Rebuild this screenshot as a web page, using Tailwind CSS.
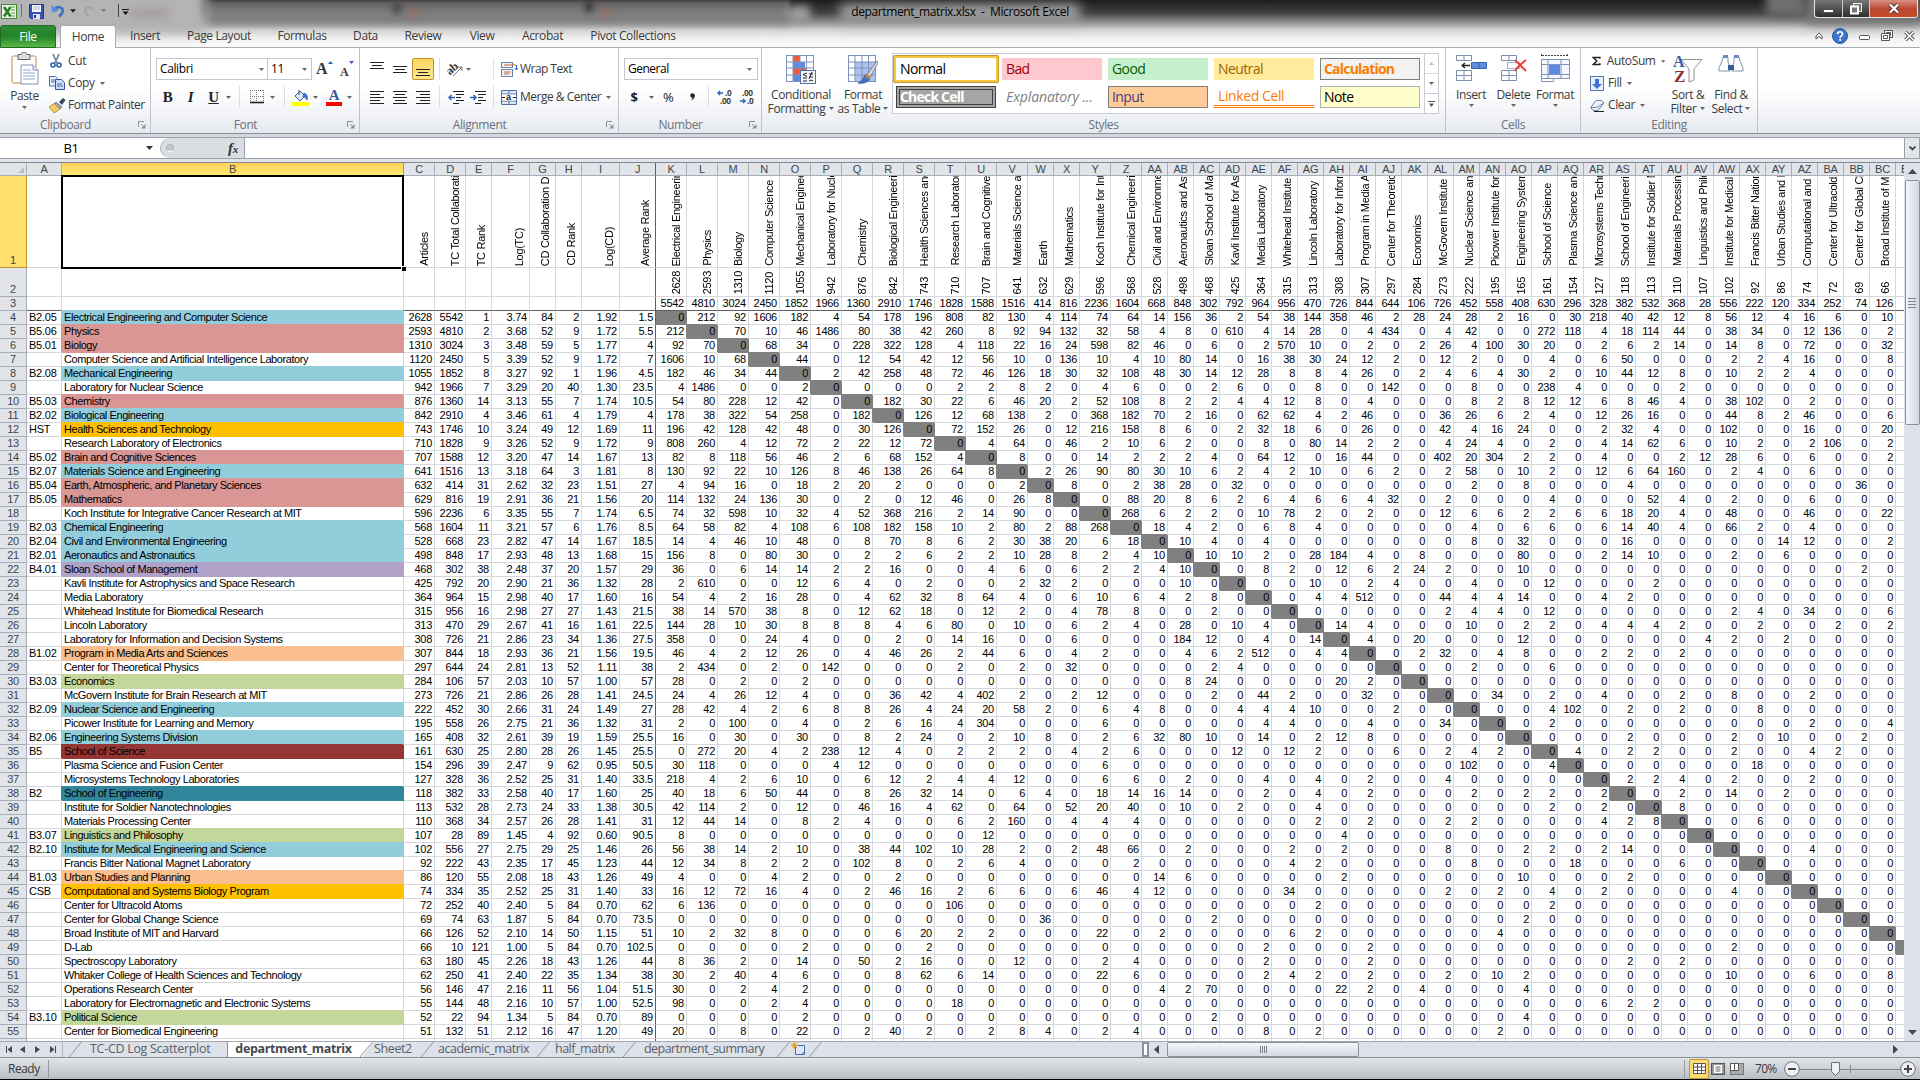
<!DOCTYPE html>
<html lang="en">
<head>
<meta charset="utf-8">
<title>department_matrix.xlsx - Microsoft Excel</title>
<script src="https://cdn.jsdelivr.net/npm/@tailwindcss/browser@4"></script>
</head>
<body class="w-[1920px] h-[1080px] overflow-hidden bg-black font-['Open_Sans','Noto_Sans',sans-serif] text-[12px] leading-none tracking-[-0.38px] text-[#3b3b3b]">

<svg class="hidden">
  <defs>
    <linearGradient id="gGrey" x1="0" y1="0" x2="1" y2="0"><stop offset="0" stop-color="#e6e6e6"/><stop offset="1" stop-color="#6b6b6b"/></linearGradient>
    <linearGradient id="gTube" x1="0" y1="0" x2="1" y2="0"><stop offset="0" stop-color="#2c4a82"/><stop offset=".45" stop-color="#b9cdec"/><stop offset="1" stop-color="#2c4a82"/></linearGradient>
    <linearGradient id="gWood" x1="0" y1="0" x2="0" y2="1"><stop offset="0" stop-color="#f3cb7c"/><stop offset="1" stop-color="#e3a94c"/></linearGradient>
  </defs>
  <symbol id="dd" viewBox="0 0 5 3"><path d="M0 0h5L2.5 3z" fill="#666"/></symbol>
  <symbol id="launch" viewBox="0 0 8 8"><path d="M.5 6V.5H6" fill="none" stroke="#8c9097"/><path d="M3 3l3 3" stroke="#8c9097"/><path d="M7.5 3v4.500H3z" fill="#8c9097"/></symbol>
</svg>

<div class="flex flex-col w-[1920px] h-[1079px] overflow-hidden">

<!-- title bar and ribbon tabs -->
<header class="relative h-[48px] shrink-0 overflow-hidden bg-[linear-gradient(to_bottom,#1c1c1c_0%,#404040_26%,#8e8e8e_46%,#d2d2d2_62%,#f4f4f4_82%,#fafafa_100%)]">
  <div class="absolute left-[205px] top-0 w-[585px] h-[30px] bg-linear-to-b from-[#5c5c5c] via-[#848484] to-transparent blur-[2px]"></div>
  <div class="absolute -left-4 -top-3 w-[222px] h-[46px] bg-[#b4b4b4] blur-[6px]"></div>
  <div class="absolute left-[393px] top-[2px] w-[8px] h-[12px] bg-[#4a4a4a] blur-[3px]"></div>
  <div class="absolute left-[585px] top-0 w-[8px] h-[12px] bg-[#3a3a3a] blur-[3px]"></div>
  <div class="absolute left-[788px] top-[6px] w-[22px] h-[16px] bg-[#a0a0a0] blur-[4px]"></div>
  <div class="absolute left-[1766px] -top-2 w-[40px] h-[24px] bg-[#707070] blur-[5px]"></div>
  <div class="absolute left-[1806px] -top-2 w-[114px] h-[32px] bg-[#777] blur-[5px]"></div>
  <div class="absolute left-[130px] top-[9px] w-[40px] h-[8px] bg-[#a39a9e] blur-[4px]"></div>
  <div class="absolute left-[409px] top-[7px] w-[10px] h-[11px] bg-[#b45a50] opacity-40 blur-[3px]"></div>
  <div class="absolute left-[601px] top-[7px] w-[10px] h-[11px] bg-[#b45a50] opacity-40 blur-[3px]"></div>
  <div class="absolute left-[840px] top-[4px] w-[240px] h-[17px] bg-[#a2a2a2] blur-[6px]"></div>

  <div class="absolute inset-0 flex flex-col">
    <div class="flex h-[25px] items-start">
      <div class="flex w-[140px] pt-[4px] items-start">
        <svg class="w-4 h-4 ml-px" viewBox="0 0 16 16"><rect x=".5" y=".5" width="15" height="14" fill="#e9f4e4" stroke="#3b8a36"/><path d="M10 3h4M10 6h4M10 9h4M10 12h4" stroke="#5aa852"/><path d="M3 3l6.500 9.500M9.500 3L3 12.500" stroke="#2d7f2b" stroke-width="2.600"/></svg>
        <span class="w-px h-[13px] bg-[#6e6e6e] ml-[4px]"></span>
        <svg class="w-[15px] h-[15px] ml-[7px]" viewBox="0 0 15 15"><path d="M.5.500h14v14H2l-1.500-1.500z" fill="#3b55b5" stroke="#23348c"/><rect x="3" y="1" width="9" height="7" fill="#f4f7fd"/><path d="M4 3h7M4 5h7" stroke="#aab8d8"/><rect x="4" y="10" width="7" height="5" fill="#dfe5f2"/><rect x="5" y="11" width="2" height="3" fill="#23348c"/></svg>
        <svg class="w-[14px] h-[14px] ml-[7px]" viewBox="0 0 15 15"><path d="M4 6.500c2-5 9.500-3.500 8.500 1.500-.5 2.500-2 4-4 5.500" fill="none" stroke="#3e6fc6" stroke-width="2.800"/><path d="M.5 1l.5 8.500L8.500 7z" fill="#5b8ede"/></svg>
        <svg class="w-[6px] h-[4px] ml-[5px] mt-[5px]" viewBox="0 0 5 3"><path d="M0 0h5L2.500 3z" fill="#222"/></svg>
        <svg class="w-[13px] h-[14px] ml-[7px]" viewBox="0 0 15 15"><path d="M11 6.500C9 1.500 1.500 3 2.500 8c.5 2.500 2 4 4 5.500" fill="none" stroke="#a0a0a0" stroke-width="2"/><path d="M14.500 1L14 9.500 6.500 7z" fill="#b0b0b0"/></svg>
        <svg class="w-[5px] h-[3px] ml-[5px] mt-[5px]" viewBox="0 0 5 3"><path d="M0 0h5L2.500 3z" fill="#777"/></svg>
        <span class="w-px h-[13px] bg-[#444] ml-[12px]"></span>
        <svg class="w-[7px] h-[6px] ml-[3px] mt-[5px]" viewBox="0 0 7 6"><path d="M0 .5h7" stroke="#111"/><path d="M.5 2.500h6L3.500 6z" fill="#111"/></svg>
      </div>
      <div class="grow text-center pr-[1px] pt-[6px] text-black">department_matrix.xlsx&nbsp; -&nbsp; Microsoft Excel</div>
      <div class="flex w-[139px] pl-[33px]">
        <div class="flex h-[18px] border border-t-0 border-[#e6e6e6] rounded-b-[4px] overflow-hidden bg-linear-to-b from-[#777] to-[#2f2f2f]">
          <span class="w-[28px] border-r border-[#ccc] flex justify-center pt-[9px]"><span class="w-[11px] h-[4px] bg-white border border-[#555]"></span></span>
          <span class="w-[27px] border-r border-[#ccc] flex justify-center pt-[3px]"><svg class="w-3 h-3" viewBox="0 0 12 12"><rect x="3.500" y=".5" width="8" height="8" fill="#777" stroke="#eee"/><rect x="1" y="3.500" width="7" height="7" fill="#777" stroke="#fff" stroke-width="2"/></svg></span>
          <span class="w-[47px] flex justify-center pt-[3px] bg-linear-to-b from-[#d99083] via-[#bb4a33] to-[#c64a28]"><svg class="w-3 h-[11px]" viewBox="0 0 12 11"><path d="M2 1.500l8 8M10 1.500l-8 8" stroke="#4b2b2b" stroke-width="4"/><path d="M2 1.500l8 8M10 1.500l-8 8" stroke="#fff" stroke-width="2.400"/></svg></span>
        </div>
      </div>
    </div>
    <nav class="flex h-[23px] border-b border-[#a9adb3]">
      <div class="w-[56px] h-[23px] rounded-t-[3px] border border-[#1f6a22] bg-linear-to-b from-[#2f8b32] via-[#218427] to-[#5cb947] text-white flex items-center justify-center">File</div>
      <div class="w-[56px] h-[23px] ml-[4px] rounded-t-[3px] border border-b-0 border-[#a9adb3] bg-white flex items-center justify-center">Home</div>
      <div class="w-[58px] flex items-center justify-center">Insert</div>
      <div class="w-[90px] flex items-center justify-center">Page Layout</div>
      <div class="w-[76px] flex items-center justify-center">Formulas</div>
      <div class="w-[51px] flex items-center justify-center">Data</div>
      <div class="w-[64px] flex items-center justify-center">Review</div>
      <div class="w-[54px] flex items-center justify-center">View</div>
      <div class="w-[67px] flex items-center justify-center">Acrobat</div>
      <div class="w-[114px] flex items-center justify-center">Pivot Collections</div>
      <div class="ml-auto flex items-center gap-[11px] pr-[5px] pb-[1px]">
        <svg class="w-[8px] h-[8px]" viewBox="0 0 8 8"><path d="M1 4l3-3 3 3v3L4 4.500 1 7z" fill="#fff" stroke="#555"/></svg>
        <svg class="w-[16px] h-[16px] -ml-[2px]" viewBox="0 0 16 16"><circle cx="8" cy="8" r="7.500" fill="#3f74cd" stroke="#2b559f"/><path d="M5.500 6.200C5.600 3 10.600 3 10.500 6c0 1.800-2.400 1.900-2.400 4" fill="none" stroke="#fff" stroke-width="1.700"/><rect x="7.200" y="11" width="1.900" height="1.900" fill="#fff"/></svg>
        <svg class="w-[11px] h-[5px] mt-[3px]" viewBox="0 0 11 5"><rect x=".5" y=".5" width="10" height="4" rx="1" fill="#fff" stroke="#555"/></svg>
        <svg class="w-[12px] h-[11px]" viewBox="0 0 12 11"><path d="M3.500 3V.5h8v7H9M5.500 3V2.500h4v3H9M.5 3.500h8v7h-8zM2.500 5.500h4v3h-4z" fill="#fff" stroke="#555"/></svg>
        <svg class="w-[11px] h-[10px]" viewBox="0 0 11 10"><path d="M1.500 1l8 8M9.500 1l-8 8" stroke="#555" stroke-width="3.600"/><path d="M1.500 1l8 8M9.500 1l-8 8" stroke="#fff" stroke-width="1.600"/></svg>
      </div>
    </nav>
  </div>
</header>

<!-- ribbon -->
<div class="flex h-[86px] shrink-0 border-b border-[#8b9097] bg-linear-to-b from-white from-50% to-[#e6e9ee]">

  <section class="w-[151px] shrink-0 border-r border-[#c0c4ca] flex flex-col">
    <div class="flex h-[69px] pt-[2px]">
      <div class="w-[49px] flex flex-col items-center pt-[2px]">
        <svg class="w-[28px] h-[34px]" viewBox="0 0 28 34"><rect x="1" y="4" width="24" height="27" rx="1.500" fill="url(#gWood)" stroke="#b98a3d"/><path d="M7 2.500h3c0-3 6-3 6 0h3v5H7z" fill="#d9dbe0" stroke="#666"/><path d="M10 13h12l5 5v14H10z" fill="#fff" stroke="#7f95bb"/><path d="M22 13v5h5" fill="#dfe8f6" stroke="#7f95bb"/><path d="M12 18h8M12 21h12M12 24h12M12 27h12" stroke="#8fa6cd"/></svg>
        <span class="mt-[4px] h-[12px]">Paste</span>
        <svg class="w-[5px] h-[3px] mt-[4px]"><use href="#dd"/></svg>
      </div>
      <div class="flex flex-col">
        <div class="flex items-center h-[22px]"><svg class="w-[14px] h-[14px] mr-[5px]" viewBox="0 0 14 14"><path d="M4 0l4 9M10 0L6 9" stroke="#6d7f99" stroke-width="1.600"/><circle cx="4" cy="11" r="2" fill="none" stroke="#2c5ea8" stroke-width="1.600"/><circle cx="10" cy="11" r="2" fill="none" stroke="#2c5ea8" stroke-width="1.600"/></svg>Cut</div>
        <div class="flex items-center h-[22px]"><svg class="w-[16px] h-[14px] mr-[3px]" viewBox="0 0 16 14"><path d="M.5.500h6l2 2V10h-8z" fill="#e9f0fb" stroke="#4b6ea8"/><path d="M6.500 3.500h6l3 3v7h-9z" fill="#c9dbf6" stroke="#2f559a"/><path d="M2 4h4M2 6h4M8 8h5M8 10h6" stroke="#4b6ea8"/></svg>Copy<svg class="w-[5px] h-[3px] ml-[5px]"><use href="#dd"/></svg></div>
        <div class="flex items-center h-[22px] tracking-[-0.5px]"><svg class="w-[17px] h-[15px] mr-[2px]" viewBox="0 0 17 15"><path d="M10 4l4-4 2.500 2L13 7z" fill="#39455f"/><path d="M7 4l6 5-2 2-6-5z" fill="#9aa5ba" stroke="#55607a" stroke-width=".7"/><path d="M5 5.500l6 5.500-6 4L0 9z" fill="#f3cf67" stroke="#a9812b" stroke-width=".8"/></svg>Format Painter</div>
      </div>
    </div>
    <div class="flex h-[16px] items-center text-[#6b727c]"><span class="w-[131px] text-center">Clipboard</span><svg class="w-2 h-2 ml-[7px]"><use href="#launch"/></svg></div>
  </section>

  <section class="w-[209px] shrink-0 border-r border-[#c0c4ca] flex flex-col">
    <div class="flex flex-col h-[69px] pt-[10px] pl-[5px] gap-[6px]">
      <div class="flex h-[22px] items-center">
        <div class="w-[112px] h-[22px] border border-[#c3c7cd] bg-white flex items-center px-[3px] text-black">Calibri<svg class="w-[5px] h-[3px] ml-auto"><use href="#dd"/></svg></div>
        <div class="w-[44px] h-[22px] border border-l-0 border-[#c3c7cd] bg-white flex items-center px-[3px] text-black">11<svg class="w-[5px] h-[3px] ml-auto mr-px"><use href="#dd"/></svg></div>
        <span class="ml-[4px] w-[12px] font-['Liberation_Serif',serif] font-bold text-[16px] text-[#333]">A</span><svg class="w-[5px] h-[3px] mb-[14px]" viewBox="0 0 5 3"><path d="M0 3h5L2.500 0z" fill="#2f62c0"/></svg>
        <span class="ml-[7px] mt-[5px] w-[9px] font-['Liberation_Serif',serif] font-bold text-[12px] text-[#333]">A</span><svg class="w-[5px] h-[3px] mb-[14px]" viewBox="0 0 5 3"><path d="M0 0h5L2.500 3z" fill="#2f62c0"/></svg>
      </div>
      <div class="flex h-[22px] items-center font-['Liberation_Serif',serif] text-[15px] text-[#222]">
        <span class="w-[23px] text-center font-bold">B</span><span class="w-[23px] text-center italic font-bold">I</span><span class="w-[23px] text-center underline font-bold">U</span>
        <svg class="w-[5px] h-[3px] ml-[1px]"><use href="#dd"/></svg><span class="w-px h-[22px] bg-[#dcdfe3] ml-[8px]"></span>
        <svg class="w-[14px] h-[14px] ml-[10px]" viewBox="0 0 14 14"><path d="M.5 0v12M6.500 0v12M13.500 0v12M0 .5h14M0 6.500h14" stroke="#777" stroke-dasharray="1 1"/><path d="M0 12.500h14" stroke="#222" stroke-width="1.600"/></svg>
        <svg class="w-[5px] h-[3px] ml-[6px]"><use href="#dd"/></svg><span class="w-px h-[22px] bg-[#dcdfe3] ml-[9px]"></span>
        <svg class="w-[17px] h-[17px] ml-[7px]" viewBox="0 0 17 17"><path d="M3 7l5-5 5 5-5 5z" fill="#dce7f6" stroke="#3b5d94"/><path d="M7 1v5" stroke="#3b5d94"/><path d="M12 4c3 1 4 4 3 7-1-2-2-3-4-3z" fill="#3f74c6" stroke="#3f74c6"/><rect x="0" y="13" width="17" height="4" fill="#ff0"/></svg>
        <svg class="w-[5px] h-[3px] ml-[4px]"><use href="#dd"/></svg>
        <span class="ml-[8px] w-[16px] h-[17px] border-b-4 border-[#f00] text-center font-bold text-[15px] leading-[13px] text-[#3a5ba0]">A</span>
        <svg class="w-[5px] h-[3px] ml-[5px]"><use href="#dd"/></svg>
      </div>
    </div>
    <div class="flex h-[16px] items-center text-[#6b727c]"><span class="w-[189px] text-center">Font</span><svg class="w-2 h-2 ml-[7px]"><use href="#launch"/></svg></div>
  </section>

  <section class="w-[259px] shrink-0 border-r border-[#c0c4ca] flex flex-col">
    <div class="flex flex-col h-[69px] pt-[10px] pl-[10px] gap-[6px]">
      <div class="flex h-[22px] items-center">
        <svg class="w-[14px] h-[14px]" viewBox="0 0 14 14"><path d="M0 .5h14M2 3.500h10M0 6.500h14" stroke="#222"/></svg>
        <svg class="w-[14px] h-[14px] ml-[9px]" viewBox="0 0 14 14"><path d="M0 4.500h14M2 7.500h10M0 10.500h14" stroke="#222"/></svg>
        <span class="w-[22px] h-[22px] ml-[5px] border border-[#c2922e] rounded-[2px] bg-linear-to-b from-[#fbd663] to-[#ffe78c] flex items-center justify-center"><svg class="w-[14px] h-[14px]" viewBox="0 0 14 14"><path d="M0 7.500h14M2 10.500h10M0 13.500h14" stroke="#222"/></svg></span>
        <span class="w-px h-[22px] bg-[#dcdfe3] ml-[5px]"></span>
        <svg class="w-[16px] h-[15px] ml-[8px] overflow-visible" viewBox="0 0 16 15"><text x="-1" y="10" transform="rotate(-40 5 8)" font-family="Liberation Serif" font-weight="bold" font-size="12" fill="#333">ab</text><path d="M5 14l9-9M14 9V5h-4" fill="none" stroke="#777"/></svg>
        <svg class="w-[5px] h-[3px] ml-[2px]"><use href="#dd"/></svg><span class="w-px h-[22px] bg-[#dcdfe3] ml-[22px]"></span>
        <svg class="w-[17px] h-[15px] ml-[7px]" viewBox="0 0 17 15"><rect x=".5" y=".5" width="11" height="5" fill="#eef3fb" stroke="#6d84ac"/><path d="M3 3h12" stroke="#c0662d"/><rect x=".5" y="7.500" width="11" height="7" fill="#eef3fb" stroke="#6d84ac"/><path d="M3 10h7M3 12h5" stroke="#c0662d"/><path d="M15.500 3v5l-2-2M15.500 8l1.500-2" fill="none" stroke="#2f62c0"/></svg>
        <span class="ml-[2px] tracking-[-0.55px]">Wrap Text</span>
      </div>
      <div class="flex h-[22px] items-center">
        <svg class="w-[14px] h-[13px]" viewBox="0 0 14 13"><path d="M0 .5h14M0 3.500h10M0 6.500h14M0 9.500h10M0 12.500h14" stroke="#222"/></svg>
        <svg class="w-[14px] h-[13px] ml-[9px]" viewBox="0 0 14 13"><path d="M0 .5h14M2 3.500h10M0 6.500h14M2 9.500h10M0 12.500h14" stroke="#222"/></svg>
        <svg class="w-[14px] h-[13px] ml-[9px]" viewBox="0 0 14 13"><path d="M0 .5h14M4 3.500h10M0 6.500h14M4 9.500h10M0 12.500h14" stroke="#222"/></svg>
        <span class="w-px h-[22px] bg-[#dcdfe3] ml-[9px]"></span>
        <svg class="w-[16px] h-[13px] ml-[8px]" viewBox="0 0 16 13"><path d="M5 .5h11M8 3.500h8M8 6.500h5M8 9.500h8M5 12.500h6" stroke="#222"/><path d="M7 6.500H1M3.500 4L1 6.500 3.500 9" fill="none" stroke="#2f62c0" stroke-width="1.500"/></svg>
        <svg class="w-[16px] h-[13px] ml-[6px]" viewBox="0 0 16 13"><path d="M5 .5h11M8 3.500h8M8 6.500h5M8 9.500h8M5 12.500h6" stroke="#222"/><path d="M0 6.500h6M3.500 4L6 6.500 3.500 9" fill="none" stroke="#2f62c0" stroke-width="1.500"/></svg>
        <span class="w-px h-[22px] bg-[#dcdfe3] ml-[7px]"></span>
        <svg class="w-[17px] h-[15px] ml-[7px]" viewBox="0 0 17 15"><path d="M.5.500h15v14H.5zM.5 4h15M.5 11h15M8 0v4M8 11v4" fill="#dbe6f7" stroke="#5572a5"/><rect x="1" y="4.500" width="14" height="6" fill="#fff"/><path d="M1 7.500h3M15 7.500h-3" stroke="#222"/><text x="5" y="10" font-family="Liberation Sans" font-weight="bold" font-size="9" fill="#222">a</text></svg>
        <span class="ml-[2px] tracking-[-0.5px]">Merge &amp; Center</span><svg class="w-[5px] h-[3px] ml-[5px]"><use href="#dd"/></svg>
      </div>
    </div>
    <div class="flex h-[16px] items-center text-[#6b727c]"><span class="w-[239px] text-center">Alignment</span><svg class="w-2 h-2 ml-[7px]"><use href="#launch"/></svg></div>
  </section>

  <section class="w-[143px] shrink-0 border-r border-[#c0c4ca] flex flex-col">
    <div class="flex flex-col h-[69px] pt-[10px] pl-[5px] gap-[6px]">
      <div class="w-[134px] h-[22px] border border-[#c3c7cd] bg-white flex items-center px-[3px] text-black tracking-[-0.5px]">General<svg class="w-[5px] h-[3px] ml-auto mr-[2px]"><use href="#dd"/></svg></div>
      <div class="flex h-[22px] items-center text-[#222]">
        <span class="w-[20px] text-center font-bold text-[13px]">$</span><svg class="w-[5px] h-[3px] ml-[5px]"><use href="#dd"/></svg>
        <span class="w-[14px] ml-[9px] text-[13px]">%</span>
        <svg class="w-[5px] h-[8px] ml-[13px]" viewBox="0 0 5 8"><circle cx="2.500" cy="2.500" r="2.200" fill="#222"/><path d="M4.600 2.500C5 5 3 7 .8 7.500 2 6.500 3 5 2.500 3z" fill="#222"/></svg>
        <span class="w-px h-[22px] bg-[#dcdfe3] ml-[13px]"></span>
        <svg class="w-[16px] h-[14px] ml-[8px] overflow-visible" viewBox="0 0 16 14"><path d="M6 3H1M3 1L1 3l2 2" fill="none" stroke="#2f62c0" stroke-width="1.500"/><text x="8" y="6" font-family="Liberation Sans" font-size="8.500" font-weight="bold" fill="#333">.0</text><text x="3" y="14" font-family="Liberation Sans" font-size="8.500" font-weight="bold" fill="#333">.00</text></svg>
        <svg class="w-[16px] h-[14px] ml-[6px] overflow-visible" viewBox="0 0 16 14"><path d="M1 11h5M4 9l2 2-2 2" fill="none" stroke="#2f62c0" stroke-width="1.500"/><text x="3" y="6" font-family="Liberation Sans" font-size="8.500" font-weight="bold" fill="#333">.00</text><text x="8" y="14" font-family="Liberation Sans" font-size="8.500" font-weight="bold" fill="#333">.0</text></svg>
      </div>
    </div>
    <div class="flex h-[16px] items-center text-[#6b727c]"><span class="w-[123px] text-center">Number</span><svg class="w-2 h-2 ml-[7px]"><use href="#launch"/></svg></div>
  </section>

  <section class="w-[684px] shrink-0 border-r border-[#c0c4ca] flex flex-col">
    <div class="flex h-[69px]">
      <div class="w-[72px] ml-[3px] pt-[7px] flex flex-col items-center">
        <svg class="w-[30px] h-[29px]" viewBox="0 0 30 29"><rect x=".5" y=".5" width="27" height="26" fill="#fff"/><rect x="7" y="0" width="7" height="7" fill="#ea5a42"/><rect x="7" y="7" width="12" height="6" fill="#5b8ae0"/><rect x="7" y="13" width="14" height="7" fill="#ea5a42"/><rect x="7" y="20" width="7" height="7" fill="#5b8ae0"/><path d="M.5 0v27M7 0v27M14 0v27M20.500 0v27M27.500 0v27M0 .5h28M0 7h28M0 13h28M0 20h28M0 26.500h28" stroke="#7e93bd" fill="none"/><rect x="14.500" y="15.500" width="15" height="13" fill="#f3f6fc" stroke="#5572a5"/><path d="M21 18l-4 1.500 4 2M17 23h4M17 26h4M23 19h4M23 22h4M26 17l-3 7M23 26l2-1 2 1" stroke="#222" fill="none"/></svg>
        <span class="mt-[5px] h-[13px]">Conditional</span>
        <span class="h-[13px] flex items-center">Formatting<svg class="w-[5px] h-[3px] ml-[4px]"><use href="#dd"/></svg></span>
      </div>
      <div class="w-[52px] pt-[7px] flex flex-col items-center">
        <svg class="w-[30px] h-[29px]" viewBox="0 0 30 29"><rect x=".5" y=".5" width="27" height="26" fill="#fff"/><rect x="7" y="7" width="21" height="20" fill="#a9c3ee"/><path d="M.5 0v27M7 0v27M14 0v27M20.500 0v27M27.500 0v27M0 .5h28M0 7h28M0 13h28M0 20h28M0 26.500h28" stroke="#7e93bd" fill="none"/><path d="M29 6L19 20l3 2 8-14z" fill="#d9dce2" stroke="#666" stroke-width=".7"/><path d="M19 19c-4 1-3 7-9 9 6 1 12-1 12-6z" fill="#4174c4" stroke="#2b4f8f" stroke-width=".7"/><path d="M18 20l4 3" stroke="#c78839" stroke-width="3"/></svg>
        <span class="mt-[5px] h-[13px]">Format</span>
        <span class="h-[13px] flex items-center">as Table<svg class="w-[5px] h-[3px] ml-[3px]"><use href="#dd"/></svg></span>
      </div>
      <div class="ml-[3px] mt-[5px] h-[61px] w-[547px] border border-[#c9cdd3] bg-white flex text-[14px] tracking-[-0.6px]">
        <div class="grid grid-cols-[100px_100px_100px_100px_100px] gap-x-[6px] grid-rows-[22px_22px] gap-y-[6px] pt-[4px] pl-[3px] w-[531px]">
          <div class="w-[106px] h-[28px] -ml-[3px] -mt-[3px] border-[3px] border-[#f4c941] outline-1 -outline-offset-1 outline-[#c39a34] rounded-[2px] flex items-center pl-[4px] text-black">Normal</div>
          <div class="bg-[#ffc7ce] text-[#9c0006] flex items-center pl-[4px]">Bad</div>
          <div class="bg-[#c6efce] text-[#006100] flex items-center pl-[4px]">Good</div>
          <div class="bg-[#ffeb9c] text-[#9c6500] flex items-center pl-[4px]">Neutral</div>
          <div class="bg-[#f2f2f2] border border-[#7f7f7f] text-[#fa7d00] font-bold flex items-center pl-[3px] tracking-[-0.8px]">Calculation</div>
          <div class="w-[100px] bg-[#a5a5a5] border-4 border-double border-[#3f3f3f] text-white font-bold flex items-center tracking-[-0.8px]">Check Cell</div>
          <div class="text-[#7f7f7f] italic flex items-center pl-[4px] whitespace-nowrap tracking-[-0.1px]">Explanatory ...</div>
          <div class="bg-[#ffcc99] border border-[#7f7f7f] text-[#3f3f76] flex items-center pl-[3px]">Input</div>
          <div class="border-b-[3px] border-double border-[#ff8001] text-[#fa7d00] flex items-center pl-[4px] tracking-[-0.4px]">Linked Cell</div>
          <div class="bg-[#ffffcc] border border-[#b2b2b2] text-black flex items-center pl-[3px]">Note</div>
        </div>
        <div class="w-[14px] flex flex-col border-l border-[#c9cdd3]">
          <div class="h-[20px] border-b border-[#d5d8dd] flex items-center justify-center"><svg class="w-[5px] h-[3px]" viewBox="0 0 5 3"><path d="M0 3h5L2.500 0z" fill="#bbb"/></svg></div>
          <div class="h-[20px] border-b border-[#c9cdd3] flex items-center justify-center"><svg class="w-[5px] h-[3px]"><use href="#dd"/></svg></div>
          <div class="h-[19px] flex items-center justify-center"><svg class="w-[7px] h-[6px]" viewBox="0 0 7 6"><path d="M0 .5h7" stroke="#555"/><path d="M1 2.500h5L3.500 6z" fill="#555"/></svg></div>
        </div>
      </div>
    </div>
    <div class="flex h-[16px] items-center text-[#6b727c]"><span class="w-[684px] text-center">Styles</span></div>
  </section>

  <section class="w-[135px] shrink-0 border-r border-[#c0c4ca] flex flex-col">
    <div class="flex h-[69px] pl-[4px] pt-[6px]">
      <div class="w-[42px] flex flex-col items-center">
        <svg class="w-[31px] h-[29px]" viewBox="0 0 31 29"><path d="M.5 1.500h15v5h-15zM8 1.500v5M.5 16.500h15v10h-15zM8 16.500v10M.5 21.500h15" fill="#fff" stroke="#7e8fae"/><path d="M15.500 8.500h15v6h-15zM23 8.500v6" fill="#5f8fe3" stroke="#3a62aa"/><path d="M14 11.500H6M9 9l-3 2.500L9 14" fill="none" stroke="#222" stroke-width="1.300"/></svg>
        <span class="mt-[6px] h-[12px]">Insert</span><svg class="w-[5px] h-[3px] mt-[3px]"><use href="#dd"/></svg>
      </div>
      <div class="w-[43px] flex flex-col items-center">
        <svg class="w-[26px] h-[29px]" viewBox="0 0 26 29"><path d="M.5 1.500h15v5h-15zM8 1.500v5M.5 16.500h15v10h-15zM8 16.500v10M.5 21.500h15" fill="#fff" stroke="#7e8fae"/><path d="M6.500 8.500h12v6h-12z" fill="#fff" stroke="#3a62aa" stroke-dasharray="1 1"/><path d="M14 6l11 11M25 6c-4 3-8 6-11 11" fill="none" stroke="#e8402a" stroke-width="2"/></svg>
        <span class="mt-[6px] h-[12px]">Delete</span><svg class="w-[5px] h-[3px] mt-[3px]"><use href="#dd"/></svg>
      </div>
      <div class="w-[40px] flex flex-col items-center">
        <svg class="w-[31px] h-[29px]" viewBox="0 0 31 29"><path d="M2 1.500h25M1.500 0v3M27.500 0v3" stroke="#444" stroke-dasharray="2 1"/><path d="M1.500 5.500h28v19h-28zM8 5v20M21 5v20M1 10.500h29M1 20.500h29" fill="#f3f6fc" stroke="#7e93bd"/><rect x="9" y="11" width="11" height="9" fill="#5b8ae0"/><path d="M1.500 24.500h12v3h-12z" fill="#fff" stroke="#7e93bd"/></svg>
        <span class="mt-[6px] h-[12px]">Format</span><svg class="w-[5px] h-[3px] mt-[3px]"><use href="#dd"/></svg>
      </div>
    </div>
    <div class="flex h-[16px] items-center justify-center text-[#6b727c]">Cells</div>
  </section>

  <section class="w-[177px] shrink-0 border-r border-[#c0c4ca] flex flex-col">
    <div class="flex h-[69px]">
      <div class="w-[84px] pl-[9px] pt-[2px] flex flex-col">
        <div class="flex items-center h-[22px]"><svg class="w-[10px] h-[10px] ml-[2px] mr-[6px]" viewBox="0 0 10 10"><path d="M9 2.500V1H1.500L5.500 5 1.500 9H9V7.500" fill="none" stroke="#222" stroke-width="1.700"/></svg>AutoSum<svg class="w-[5px] h-[3px] ml-[5px]"><use href="#dd"/></svg></div>
        <div class="flex items-center h-[22px]"><svg class="w-[14px] h-[15px] mr-[4px]" viewBox="0 0 14 15"><rect x=".5" y=".5" width="13" height="14" fill="#e6effc" stroke="#5577b5"/><path d="M5 3h4v5h3l-5 5-5-5h3z" fill="#3f74d4"/></svg>Fill<svg class="w-[5px] h-[3px] ml-[5px]"><use href="#dd"/></svg></div>
        <div class="flex items-center h-[22px]"><svg class="w-[15px] h-[13px] mr-[3px]" viewBox="0 0 15 13"><path d="M6 1.500h5.500L14 4l-6 7.500H3L.8 8.500z" fill="#edf1f8" stroke="#6b82ad"/><path d="M.8 8.500h6L14 4" fill="none" stroke="#6b82ad"/><path d="M4 12.500h10" stroke="#222"/></svg>Clear<svg class="w-[5px] h-[3px] ml-[5px]"><use href="#dd"/></svg></div>
      </div>
      <div class="w-[46px] pt-[6px] flex flex-col items-center">
        <svg class="w-[30px] h-[30px]" viewBox="0 0 30 30"><path d="M8 5.500h21L21 15v11l-5 2V15z" fill="url(#gGrey)" stroke="#777" stroke-width=".8"/><text x="0" y="13" font-family="Liberation Serif" font-weight="bold" font-size="16" fill="#3a5fa8">A</text><text x="1" y="28" font-family="Liberation Serif" font-weight="bold" font-size="17" fill="#8f2d2d">Z</text></svg>
        <span class="mt-[5px] h-[13px]">Sort &amp;</span>
        <span class="h-[13px] flex items-center">Filter<svg class="w-[5px] h-[3px] ml-[4px]"><use href="#dd"/></svg></span>
      </div>
      <div class="w-[40px] pt-[6px] flex flex-col items-center">
        <svg class="w-[28px] h-[30px]" viewBox="0 0 28 30"><path d="M6 3h5v5l2 5v4H2v-3l3-7zM22 3h-5v5l-2 5v4h11v-3l-3-7z" fill="url(#gTube)" stroke="#2c4a82" stroke-width=".6"/><rect x="6" y="1" width="5" height="3" fill="#6f8cc0"/><rect x="17" y="1" width="5" height="3" fill="#6f8cc0"/><rect x="11" y="11" width="6" height="5" fill="#3d5c96"/><rect x="1" y="16" width="10" height="10" rx="1" fill="url(#gTube)"/><rect x="17" y="16" width="10" height="10" rx="1" fill="url(#gTube)"/></svg>
        <span class="mt-[5px] h-[13px]">Find &amp;</span>
        <span class="h-[13px] flex items-center">Select<svg class="w-[5px] h-[3px] ml-[3px]"><use href="#dd"/></svg></span>
      </div>
    </div>
    <div class="flex h-[16px] items-center justify-center text-[#6b727c]">Editing</div>
  </section>
</div>

<!-- formula bar -->
<div class="flex h-[25px] shrink-0 pt-[3px] bg-[#d3d9e2] text-black">
  <div class="w-[244px] shrink-0 h-[22px] flex items-center border-y border-[#9ba0a8] bg-white">
    <div class="w-[142px] text-center text-[13px]">B1</div>
    <svg class="w-[7px] h-[4px] ml-[4px]" viewBox="0 0 7 4"><path d="M0 0h7L3.500 4z" fill="#333"/></svg>
    <div class="ml-[7px] w-[84px] h-[20px] rounded-l-full border-l border-[#a9aeb6] bg-[#dadde2] flex items-center">
      <span class="w-[8px] h-[8px] ml-[5px] rounded-full bg-[#c4c7cc] border border-[#b0b4bb] border-b-white"></span>
      <span class="ml-[54px] font-['Liberation_Serif',serif] italic font-bold text-[15px] text-[#333]">f<span class="text-[11px]">x</span></span>
    </div>
  </div>
  <div class="grow h-[22px] border border-r-0 border-[#9ba0a8] bg-white"></div>
  <div class="w-[16px] h-[22px] border border-[#9ba0a8] bg-[#e3e6eb] flex items-center justify-center"><svg class="w-[7px] h-[5px]" viewBox="0 0 7 5"><path d="M.5.500l3 3 3-3" fill="none" stroke="#444" stroke-width="1.800"/></svg></div>
</div>
<div class="h-[4px] shrink-0 bg-[#dfe4ec] border-b border-[#85898f]"></div>

<!-- sheet -->
<main class="flex h-[878px] shrink-0 bg-white">
  <div id="sheet" class="relative w-[1904px] h-[878px] overflow-hidden font-['Liberation_Sans',sans-serif] text-[11px] tracking-[-0.25px] text-black"></div>
  <div class="w-[16px] bg-[#dde1e9] flex flex-col items-center">
    <svg class="w-[9px] h-[5px] mt-[6px]" viewBox="0 0 9 5"><path d="M0 5h9L4.500 0z" fill="#444a52"/></svg>
    <div class="mt-[6px] w-[15px] h-[245px] border border-[#8b919b] rounded-[2px] bg-linear-to-r from-[#f2f5f9] to-[#d3d8e1] flex flex-col items-center justify-center gap-[2px]"><span class="w-[8px] h-px bg-[#7d838c]"></span><span class="w-[8px] h-px bg-[#7d838c]"></span><span class="w-[8px] h-px bg-[#7d838c]"></span><span class="w-[8px] h-px bg-[#7d838c]"></span></div>
    <svg class="w-[9px] h-[5px] mt-auto mb-[6px]" viewBox="0 0 9 5"><path d="M0 0h9L4.500 5z" fill="#444a52"/></svg>
  </div>
</main>

<!-- sheet tabs and horizontal scroll bar -->
<div class="flex h-[17px] shrink-0 bg-[#dde1e9] border-t border-[#a3a8b0] border-b border-b-[#8b9097] text-[12.500px] text-[#5b6068]">
  <div class="flex items-center w-[63px] border-r border-[#b3b8c0] pl-[6px] gap-[8px]">
    <svg class="w-[6px] h-[7px]" viewBox="0 0 6 7"><path d="M.5 0v7" stroke="#444a52"/><path d="M6 0v7L1.500 3.500z" fill="#444a52"/></svg>
    <svg class="w-[5px] h-[7px]" viewBox="0 0 5 7"><path d="M5 0v7L0 3.500z" fill="#444a52"/></svg>
    <svg class="w-[5px] h-[7px] ml-[2px]" viewBox="0 0 5 7"><path d="M0 0v7l5-3.500z" fill="#444a52"/></svg>
    <svg class="w-[6px] h-[7px] ml-[2px]" viewBox="0 0 6 7"><path d="M5.500 0v7" stroke="#444a52"/><path d="M0 0v7l4.500-3.500z" fill="#444a52"/></svg>
  </div>
  <svg class="w-[15px] h-[15px] ml-[5px]" viewBox="0 0 15 15"><path d="M1 15L13.500 0" stroke="#8f959e"/></svg>
  <div class="w-[144px] flex items-center pl-[7px] tracking-[-0.3px]">TC-CD Log Scatterplot</div>
  <div class="w-[132px] flex items-center justify-center bg-white font-bold text-[#444a52] border-l border-[#8f959e] tracking-[-0.35px]">department_matrix</div>
  <svg class="w-[15px] h-[15px]" viewBox="0 0 15 15"><path d="M0 0h14L3 15H0z" fill="#fff"/><path d="M1 15L13.500 0" stroke="#8f959e"/></svg>
  <div class="w-[46px] flex items-center">Sheet2</div>
  <svg class="w-[15px] h-[15px]" viewBox="0 0 15 15"><path d="M1 15L13.500 0" stroke="#8f959e"/></svg>
  <div class="w-[101px] flex items-center pl-[3px] tracking-[-0.5px]">academic_matrix</div>
  <svg class="w-[15px] h-[15px]" viewBox="0 0 15 15"><path d="M1 15L13.500 0" stroke="#8f959e"/></svg>
  <div class="w-[71px] flex items-center pl-[4px] tracking-[-0.5px]">half_matrix</div>
  <svg class="w-[15px] h-[15px]" viewBox="0 0 15 15"><path d="M1 15L13.500 0" stroke="#8f959e"/></svg>
  <div class="w-[139px] flex items-center pl-[7px] tracking-[-0.55px]">department_summary</div>
  <svg class="w-[15px] h-[15px]" viewBox="0 0 15 15"><path d="M1 15L13.500 0" stroke="#8f959e"/></svg>
  <svg class="w-[15px] h-[14px]" viewBox="0 0 15 14"><path d="M4.500 3.500h9v9h-9z" fill="#dce8fa" stroke="#4b6ea8"/><path d="M10 13l4-4" stroke="#4b6ea8"/><path d="M3.500 0v7M0 3.500h7M1 1l5 5M6 1L1 6" stroke="#e89a2a"/></svg>
  <svg class="w-[15px] h-[15px] ml-[2px]" viewBox="0 0 15 15"><path d="M1 15L13.500 0" stroke="#8f959e"/></svg>
  <div class="ml-auto flex items-center h-[15px] w-[778px]">
    <span class="w-[7px] h-[15px] border-2 border-[#8b919b] bg-white"></span>
    <svg class="w-[5px] h-[9px] ml-[5px]" viewBox="0 0 5 9"><path d="M5 0v9L0 4.500z" fill="#444a52"/></svg>
    <div class="ml-[8px] w-[192px] h-[15px] border border-[#8b919b] rounded-[2px] bg-linear-to-b from-[#f5f7fa] to-[#d3d8e1] flex items-center justify-center gap-px"><span class="w-px h-[7px] bg-[#7d838c]"></span><span class="w-px h-[7px] bg-[#7d838c]"></span><span class="w-px h-[7px] bg-[#7d838c]"></span><span class="w-px h-[7px] bg-[#7d838c]"></span></div>
    <svg class="w-[5px] h-[9px] ml-auto mr-[22px]" viewBox="0 0 5 9"><path d="M0 0v9l5-4.500z" fill="#444a52"/></svg>
  </div>
</div>

<!-- status bar -->
<footer class="flex h-[21px] shrink-0 items-center bg-linear-to-b from-[#e2e5e9] to-[#b9bec5]">
  <span class="w-[48px] pl-[8px] tracking-[-0.5px]">Ready</span><span class="w-px h-[18px] bg-[#94999f]"></span>
  <div class="ml-auto flex items-center h-[21px] w-[236px]">
    <span class="w-px h-[18px] bg-[#94999f]"></span>
    <span class="w-[20px] h-[20px] ml-[4px] border border-[#c2922e] rounded-[2px] bg-[#fbdc72] flex items-center justify-center"><svg class="w-[13px] h-[11px]" viewBox="0 0 13 11"><path d="M.5.500h12v10H.5zM4.500 0v11M8.500 0v11M0 4h13M0 7.500h13" fill="#fff" stroke="#555"/></svg></span>
    <svg class="w-[14px] h-[12px] ml-[2px]" viewBox="0 0 14 12"><rect x=".5" y=".5" width="13" height="11" fill="#999" stroke="#555"/><rect x="3" y="2" width="8" height="8" fill="#fff"/><path d="M4.500 4h5M4.500 6h5M4.500 8h5" stroke="#666"/></svg>
    <svg class="w-[14px] h-[12px] ml-[5px]" viewBox="0 0 14 12"><rect x=".5" y=".5" width="13" height="11" fill="#aaa" stroke="#777"/><path d="M.5.500h4v7h-4zM4.500.500h4v7h-4z" fill="#fff" stroke="#555"/></svg>
    <span class="ml-[11px] w-[29px] tracking-[-0.7px]">70%</span>
    <svg class="w-[16px] h-[16px]" viewBox="0 0 16 16"><circle cx="8" cy="8" r="7.300" fill="#eef0f2" stroke="#6c7178"/><path d="M4 8h8" stroke="#444" stroke-width="2"/></svg>
    <svg class="w-[100px] h-[16px]" viewBox="0 0 100 16"><path d="M0 8.500h100" stroke="#80858d"/><path d="M50.500 4v8" stroke="#80858d"/><path d="M31.500 1.500h8v9l-4 4-4-4z" fill="#eef0f2" stroke="#6c7178"/></svg>
    <svg class="w-[16px] h-[16px]" viewBox="0 0 16 16"><circle cx="8" cy="8" r="7.300" fill="#eef0f2" stroke="#6c7178"/><path d="M4 8h8M8 4v8" stroke="#444" stroke-width="2"/></svg>
  </div>
</footer>
</div>

<script>
const W35='w-[35px]',W342='w-[342px]',W31='w-[31px]',W26='w-[26px]',W38='w-[38px]',W36='w-[36px]';
const fills={b:'bg-[#92cddc] shadow-[-1px_-1px_0_#92cddc]',r:'bg-[#da9694] shadow-[-1px_-1px_0_#da9694]',y:'bg-[#ffc000] shadow-[-1px_-1px_0_#ffc000]',p:'bg-[#b1a0c7] shadow-[-1px_-1px_0_#b1a0c7]',o:'bg-[#fabf8f] shadow-[-1px_-1px_0_#fabf8f]',g:'bg-[#c4d79b] shadow-[-1px_-1px_0_#c4d79b]',R:'bg-[#963634] shadow-[-1px_-1px_0_#963634]',B:'bg-[#31869b] shadow-[-1px_-1px_0_#31869b]'};
// code | fill | name | articles, TC, TC rank, log TC, CD, CD rank, log CD, average
const people=`B2.05|b|Electrical Engineering and Computer Science|2628 5542 1 3.74 84 2 1.92 1.5
B5.06|r|Physics|2593 4810 2 3.68 52 9 1.72 5.5
B5.01|r|Biology|1310 3024 3 3.48 59 5 1.77 4
||Computer Science and Artificial Intelligence Laboratory|1120 2450 5 3.39 52 9 1.72 7
B2.08|b|Mechanical Engineering|1055 1852 8 3.27 92 1 1.96 4.5
||Laboratory for Nuclear Science|942 1966 7 3.29 20 40 1.30 23.5
B5.03|r|Chemistry|876 1360 14 3.13 55 7 1.74 10.5
B2.02|b|Biological Engineering|842 2910 4 3.46 61 4 1.79 4
HST|y|Health Sciences and Technology|743 1746 10 3.24 49 12 1.69 11
||Research Laboratory of Electronics|710 1828 9 3.26 52 9 1.72 9
B5.02|r|Brain and Cognitive Sciences|707 1588 12 3.20 47 14 1.67 13
B2.07|b|Materials Science and Engineering|641 1516 13 3.18 64 3 1.81 8
B5.04|r|Earth, Atmospheric, and Planetary Sciences|632 414 31 2.62 32 23 1.51 27
B5.05|r|Mathematics|629 816 19 2.91 36 21 1.56 20
||Koch Institute for Integrative Cancer Research at MIT|596 2236 6 3.35 55 7 1.74 6.5
B2.03|b|Chemical Engineering|568 1604 11 3.21 57 6 1.76 8.5
B2.04|b|Civil and Environmental Engineering|528 668 23 2.82 47 14 1.67 18.5
B2.01|b|Aeronautics and Astronautics|498 848 17 2.93 48 13 1.68 15
B4.01|p|Sloan School of Management|468 302 38 2.48 37 20 1.57 29
||Kavli Institute for Astrophysics and Space Research|425 792 20 2.90 21 36 1.32 28
||Media Laboratory|364 964 15 2.98 40 17 1.60 16
||Whitehead Institute for Biomedical Research|315 956 16 2.98 27 27 1.43 21.5
||Lincoln Laboratory|313 470 29 2.67 41 16 1.61 22.5
||Laboratory for Information and Decision Systems|308 726 21 2.86 23 34 1.36 27.5
B1.02|o|Program in Media Arts and Sciences|307 844 18 2.93 36 21 1.56 19.5
||Center for Theoretical Physics|297 644 24 2.81 13 52 1.11 38
B3.03|g|Economics|284 106 57 2.03 10 57 1.00 57
||McGovern Institute for Brain Research at MIT|273 726 21 2.86 26 28 1.41 24.5
B2.09|b|Nuclear Science and Engineering|222 452 30 2.66 31 24 1.49 27
||Picower Institute for Learning and Memory|195 558 26 2.75 21 36 1.32 31
B2.06|b|Engineering Systems Division|165 408 32 2.61 39 19 1.59 25.5
B5|R|School of Science|161 630 25 2.80 28 26 1.45 25.5
||Plasma Science and Fusion Center|154 296 39 2.47 9 62 0.95 50.5
||Microsystems Technology Laboratories|127 328 36 2.52 25 31 1.40 33.5
B2|B|School of Engineering|118 382 33 2.58 40 17 1.60 25
||Institute for Soldier Nanotechnologies|113 532 28 2.73 24 33 1.38 30.5
||Materials Processing Center|110 368 34 2.57 26 28 1.41 31
B3.07|g|Linguistics and Philosophy|107 28 89 1.45 4 92 0.60 90.5
B2.10|b|Institute for Medical Engineering and Science|102 556 27 2.75 29 25 1.46 26
||Francis Bitter National Magnet Laboratory|92 222 43 2.35 17 45 1.23 44
B1.03|o|Urban Studies and Planning|86 120 55 2.08 18 43 1.26 49
CSB|y|Computational and Systems Biology Program|74 334 35 2.52 25 31 1.40 33
||Center for Ultracold Atoms|72 252 40 2.40 5 84 0.70 62
||Center for Global Change Science|69 74 63 1.87 5 84 0.70 73.5
||Broad Institute of MIT and Harvard|66 126 52 2.10 14 50 1.15 51
||D-Lab|66 10 121 1.00 5 84 0.70 102.5
||Spectroscopy Laboratory|63 180 45 2.26 18 43 1.26 44
||Whitaker College of Health Sciences and Technology|62 250 41 2.40 22 35 1.34 38
||Operations Research Center|56 146 47 2.16 11 56 1.04 51.5
||Laboratory for Electromagnetic and Electronic Systems|55 144 48 2.16 10 57 1.00 52.5
B3.10|g|Political Science|52 22 94 1.34 5 84 0.70 89
||Center for Biomedical Engineering|51 132 51 2.12 16 47 1.20 49`.split('\n').map(l=>l.split('|'));
// pair counts right of the diagonal; the matrix is symmetric
const upper=`212 92 1606 182 4 54 178 196 808 82 130 4 114 74 64 14 156 36 2 54 38 144 358 46 2 28 24 28 2 16 0 30 218 40 42 12 8 56 12 4 16 6 0 10
70 10 46 1486 80 38 42 260 8 92 94 132 32 58 4 8 0 610 4 14 28 0 4 434 0 4 42 0 0 272 118 4 18 114 44 0 38 34 0 12 136 0 2
68 34 0 228 322 128 4 118 22 16 24 598 82 46 0 6 0 2 570 10 0 2 0 2 26 4 100 30 20 0 2 6 2 14 0 14 8 0 72 0 0 32
44 0 12 54 42 12 56 10 0 136 10 4 10 80 14 0 16 38 30 24 12 2 0 12 2 0 0 4 0 6 50 0 0 0 2 2 4 16 0 0 8
2 42 258 48 72 46 126 18 30 32 108 48 30 14 12 28 8 8 4 26 0 2 4 6 4 30 2 0 10 44 12 8 0 10 2 2 4
0 0 0 2 2 8 2 0 4 6 0 0 2 6 0 0 8 0 0 142 0 0 8 0 0 238 4 0 0 0 2
182 30 22 6 46 20 2 52 108 8 2 2 4 4 12 8 0 4 0 0 0 8 2 8 12 12 6 8 46 4 0 38 102 0 2
126 12 68 138 2 0 368 182 70 2 16 0 62 62 4 2 46 0 0 36 26 6 2 4 0 12 26 16 0 0 44 8 2 46 0 0 6
72 152 26 0 12 216 158 8 6 0 2 32 18 6 0 26 0 0 42 4 16 24 0 0 2 32 4 0 0 102 0 0 16 0 0 20
4 64 0 46 2 10 6 2 0 0 8 0 80 14 2 2 0 4 24 4 0 2 0 4 14 62 6 0 10 2 0 2 106 0 2
8 0 0 14 2 2 2 4 0 64 12 0 16 44 0 0 402 20 304 2 2 0 4 0 0 2 12 28 6 0 6 0 0 2
2 26 90 80 30 10 6 2 4 2 10 0 6 2 0 2 58 0 10 2 0 12 6 64 160 0 2 4 0 6
8 0 2 38 28 0 32 0 0 0 0 0 0 0 0 2 0 8 0 0 0 4 0 0 0 0 0 0 0 0 36
0 88 20 8 6 2 6 4 6 6 4 32 0 2 0 0 0 4 0 0 0 52 4 0 2 0 0 6
268 6 2 2 0 10 78 2 0 2 0 0 12 6 6 2 2 6 6 18 20 4 0 48 0 0 46 0 0 22
18 4 2 0 6 8 4 0 0 0 0 0 4 0 6 6 0 6 14 40 4 0 66 2 0 4
10 4 0 4 0 0 0 0 0 0 0 8 0 32 0 0 0 16 0 0 0 0 0 14 12 0 0 2
10 10 2 0 28 184 4 0 8 0 0 0 80 0 0 2 14 10 0 0 2 0 6
0 8 2 0 12 6 2 24 2 0 0 10 0 0 0 0 0 0 0 0 0 0 0 0 2
0 0 10 0 2 4 0 0 4 0 0 12 0 0 0 2
0 4 4 512 0 0 44 4 4 14 0 0 4 2
0 0 0 0 0 2 4 4 0 12 0 0 0 0 0 0 2 4 0 34 0 0 6
14 4 0 0 0 10 0 2 2 0 4 4 4 2 0 0 2 0 0 2 0 2
4 0 20 0 0 0 12 0 0 0 0 0 0 4 2 0 2
0 2 32 0 4 8 0 0 2 2 0 2
0 0 2 0 0 6
0
0 34 0 2 0 4 0 0 2 0 8 0 0 2
0 0 4 102 0 2 0 2 0 0 8
0 2 0 0 0 0 0 0 0 0 0 2 0 0 4
0 0 0 2 0 0 0 2 0 10 0 0 2
4 0 2 2 0 0 2 0 0 4 2
0 0 0 0 0 0 18
2 2 4 0 2 0 0 2
0 2 0 14 0 2
8
0 0 6
0
0 0 4`.split('\n').map(l=>l.split(' '));
const extra=`0 0 0 0 2 0 0 0 2 0 0 0 0 0 0 0 0 0 0 0 2 0 0 0 2 0 0 0 0 0 0 0 0 0 0 0 0 0 2
8 36 2 0 14 0 50 2 16 0 0 12 0 0 2 4 0 0 0 0 2 0 0 0 2 0 0 0 0 0 0 0 0 0 2 0 2
30 2 40 4 6 0 0 8 62 6 14 0 0 0 22 6 0 0 0 0 2 4 2 0 2 0 0 2 0 10 2 0 0 0 0 0 0 0 10 0 0 6 0 0 8
30 0 2 4 2 0 0 0 0 0 0 0 0 0 0 0 4 2 70 0 0 0 0 22 2 0 4 0 0 0 4
98 0 0 2 4 0 0 0 0 18 0 0 0 0 0 0 0 0 0 0 0 0 0 0 0 0 0 0 0 0 0 0 0 6 2 2
0 0 0 0 2 0 0 0 0 0 0 0 0 0 0 0 0 0 2 0 0 0 0 0 0 0 0 0 0 0 4
20 0 8 0 22 0 2 40 2 0 2 8 4 0 2 4 0 0 0 0 8 0 2 0 0 0 0 0 0 2`.split('\n').map(l=>l.split(' '));
const N=45;
const val=(r,c)=>r>=N?(extra[r-N][c]||0):r===c?0:((upper[Math.min(r,c)]||[])[Math.abs(r-c)-1]||0);
const colW=c=>c===0?W35:c===1?W342:[W31,W31,W26,W38,W26,W26,W38,W36][c-2]||(c<22?W31:c<24?W26:c<26?W31:W26);
const letter=c=>c<26?String.fromCharCode(65+c):String.fromCharCode(64+Math.floor(c/26))+String.fromCharCode(65+c%26);
const COLS=56;
const edge=c=>c===9?'border-r border-r-[#5f5f5f]':'border-r border-r-[#d6d8dc]';
const rowHead=(n,h,on)=>`<div class="w-[27px] shrink-0 ${h} border-r border-b ${on?'bg-[#ffe06e] border-[#c2922e]':'bg-[#e1e4e9] border-[#a9adb5]'} text-[#3f444c] flex items-end justify-center pb-px leading-[12px]">${n}</div>`;
let h='<div class="flex h-[13px] w-[1930px]"><div class="w-[27px] shrink-0 bg-[#e1e4e9] border-r border-b border-[#a9adb5] flex justify-end items-end p-[2px]"><svg class="w-[6px] h-[6px]" viewBox="0 0 6 6"><path d="M6 0v6H0z" fill="#b9bdc5"/></svg></div>';
for(let c=0;c<COLS;c++)h+=`<div class="${colW(c)} shrink-0 border-b ${c===1?'bg-linear-to-b from-[#fbd05a] to-[#fdea72] border-r border-[#c2922e]':c===9?'bg-[#e1e4e9] border-r border-b-[#a9adb5] border-r-[#5f5f5f]':'bg-[#e1e4e9] border-r border-[#a9adb5]'} text-[#3f444c] text-center leading-[13px] overflow-hidden">${letter(c)}</div>`;
h+='</div>';
const short={3:'Computer Science',12:'Earth',21:'Whitehead Institute',27:'McGovern Institute',31:'School of Science',41:'Computational and'};
const heads=['','','Articles','TC Total Collaborations','TC Rank','Log(TC)','CD Collaboration Distance','CD Rank','Log(CD)','Average Rank'];
const vert=(t)=>`<span class="[writing-mode:vertical-rl] rotate-180 whitespace-nowrap leading-[13px] shrink-0">${t}</span>`;
h+='<div class="flex h-[92px] w-[1930px]">'+rowHead(1,'h-[92px]',true);
for(let c=0;c<COLS;c++){const i=c-10;const t=c<10?heads[c]:i<N?(short[i]||people[i][2]):'';h+=`<div class="${colW(c)} shrink-0 h-[92px] border-b border-b-[#d6d8dc] ${edge(c)} overflow-hidden flex flex-col justify-end items-end pb-px pr-[3px] tracking-[-0.3px]">${t?vert(t):''}</div>`;}
h+='</div><div class="flex h-[29px] w-[1930px]">'+rowHead(2,'h-[29px]');
for(let c=0;c<COLS;c++){const i=c-10;const t=i>=0&&i<N?people[i][3].split(' ')[0]:'';h+=`<div class="${colW(c)} shrink-0 h-[29px] border-b border-b-[#d6d8dc] ${edge(c)} overflow-hidden flex flex-col justify-end items-end pb-[2px] pr-[3px] tracking-[-0.3px]">${t?vert(t):''}</div>`;}
const num=(c,t,bb)=>`<div class="${colW(c)} shrink-0 border-b ${bb} ${edge(c)} text-right pr-[2px] leading-[12px] whitespace-nowrap">${t}</div>`;
h+='</div><div class="flex h-[14px] w-[1930px]">'+rowHead(3,'h-[14px]');
for(let c=0;c<COLS;c++){const i=c-10;h+=num(c,i>=0&&i<N?people[i][3].split(' ')[1]:'','border-b-[#5f5f5f]');}
h+='</div>';
people.forEach((p,r)=>{
  h+='<div class="flex h-[14px] w-[1930px]">'+rowHead(r+4,'h-[14px]');
  h+=`<div class="w-[35px] shrink-0 border-b border-b-[#d6d8dc] border-r border-r-[#d6d8dc] pl-[2px] leading-[12px]">${p[0]}</div>`;
  h+=`<div class="w-[342px] shrink-0 pl-[2px] leading-[12px] whitespace-nowrap tracking-[-0.42px] ${p[1]?fills[p[1]]:'border-b border-b-[#d6d8dc] border-r border-r-[#d6d8dc]'}">${p[2]}</div>`;
  p[3].split(' ').forEach((v,k)=>h+=num(k+2,v,'border-b-[#d6d8dc]'));
  for(let c=0;c<=N;c++){
    if(c===r)h+=`<div class="${colW(c+10)} shrink-0 bg-[#808080] ${c?'shadow-[-1px_-1px_0_#808080]':''} text-right pr-[3px] leading-[12px]">${c<N?0:''}</div>`;
    else h+=num(c+10,c<N?val(r,c):'','border-b-[#d6d8dc]');
  }
  h+='</div>';
});
h+='<div class="flex h-[14px] w-[1930px]">'+rowHead('','h-[14px]');
for(let c=0;c<COLS;c++)h+=num(c,'','border-b-[#d6d8dc]');
h+='</div><div class="absolute left-[61px] top-[12px] w-[343px] h-[94px] border-2 border-black"></div><div class="absolute left-[401px] top-[103px] w-[5px] h-[5px] bg-black border-l border-t border-white"></div>';
document.getElementById('sheet').innerHTML=h;
</script>
</body>
</html>
